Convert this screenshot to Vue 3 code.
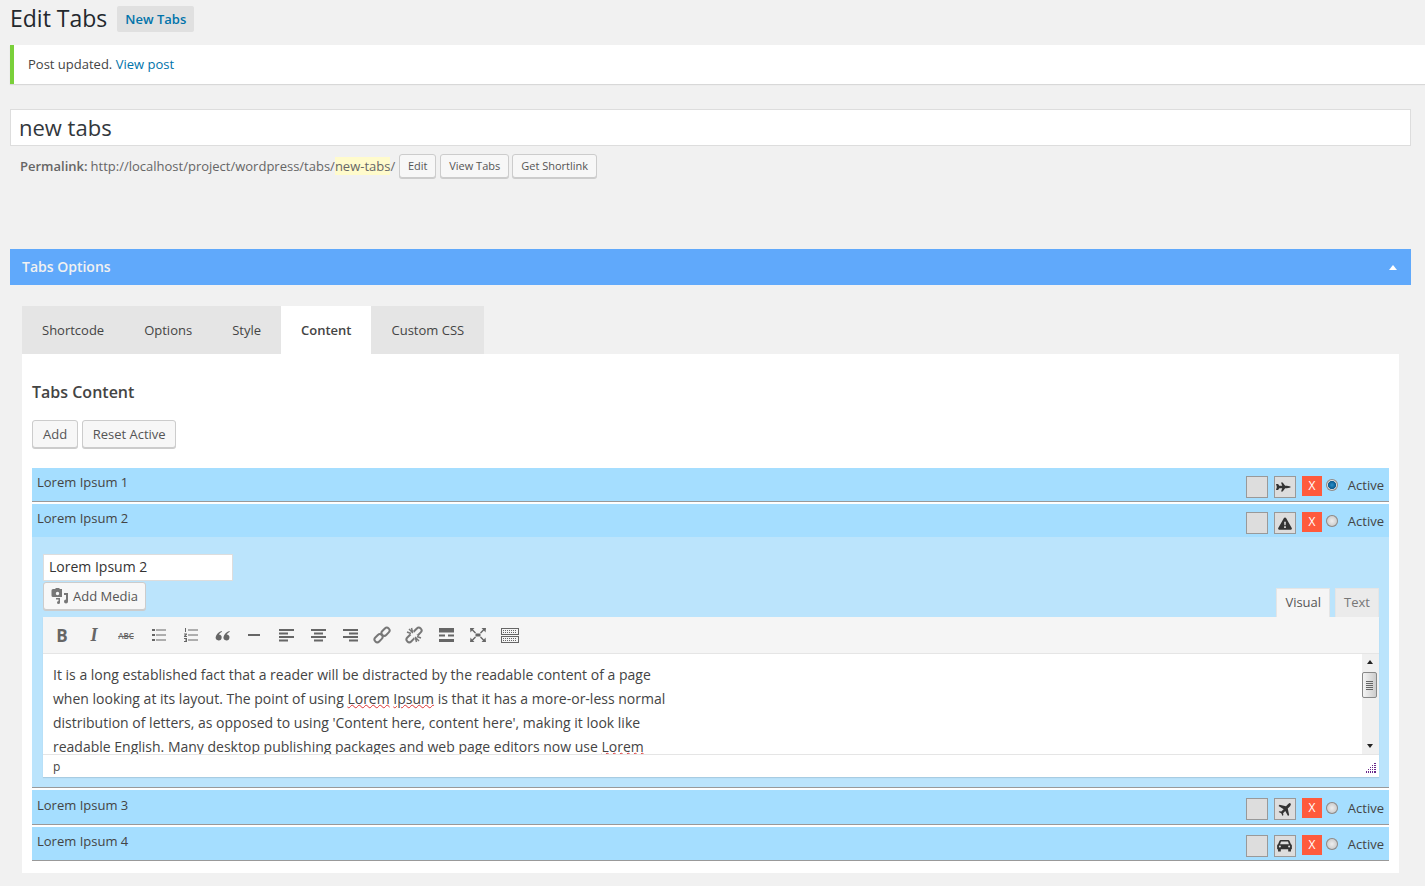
<template>
  <div class="wrap">
    <div class="page-head">
      <h1>Edit Tabs</h1>
      <a class="add-new">New Tabs</a>
    </div>

    <div class="notice">Post updated. <a>View post</a></div>

    <div class="title-box">new tabs</div>
    <div class="permalink">
      <strong>Permalink:</strong>
      <span class="url">http://localhost/project/wordpress/tabs/<span class="slug">new-tabs</span>/</span>
      <button class="btn btn-small btn-edit">Edit</button>
      <button class="btn btn-small">View Tabs</button>
      <button class="btn btn-small">Get Shortlink</button>
    </div>

    <div class="metabox-bar">
      <span class="bar-title">Tabs Options</span>
      <i class="bar-arrow"></i>
    </div>

    <div class="options">
      <div class="tabs">
        <div
          v-for="tab in tabs"
          :key="tab"
          class="tab"
          :class="{ current: tab === 'Content' }"
        >
          {{ tab }}
        </div>
      </div>

      <div class="panel">
        <h3>Tabs Content</h3>
        <div class="panel-actions">
          <button class="btn">Add</button>
          <button class="btn btn-reset">Reset Active</button>
        </div>

        <!-- ITEM 1 -->
        <div class="item">
          <div class="item-head">
            <span class="item-title">Lorem Ipsum 1</span>
            <div class="controls">
              <span class="swatch"></span>
              <span class="swatch icon jet">
                <svg width="15" height="10" viewBox="0 0 18 12"><path fill="#333" d="M0 2.500h2.500L4 4.500h3.500L6 .5h2l3 4h2q4 .5 5 1.500-1 1-5 1.500h-2l-3 4H6l1.500-4H4l-1.500 2H0l1-3.500z"/></svg>
              </span>
              <span class="remove">X</span>
              <span class="radio checked"></span>
              <span class="active-label">Active</span>
            </div>
          </div>
        </div>

        <!-- ITEM 2 -->
        <div class="item open">
          <div class="item-head">
            <span class="item-title">Lorem Ipsum 2</span>
            <div class="controls">
              <span class="swatch"></span>
              <span class="swatch icon">
                <svg width="14" height="13" viewBox="0 0 16 14"><path fill="#333" fill-rule="evenodd" d="M8 0q.8 0 1.200.7l6.500 11.500q.6 1.300-.9 1.800H1.200q-1.500-.5-.9-1.800L6.800.7Q7.200 0 8 0zM7 5l.3 4h1.400L9 5zM7 10v2h2v-2z"/></svg>
              </span>
              <span class="remove">X</span>
              <span class="radio"></span>
              <span class="active-label">Active</span>
            </div>
          </div>

          <div class="item-body">
            <input class="item-input" value="Lorem Ipsum 2" />
            <div class="editor-tools">
              <button class="btn media-btn">
                <svg width="18" height="16" viewBox="0 0 18 16"><path fill="#777" fill-rule="evenodd" d="M2 1h2l1-1h3l1 1h2v8H2a1.500 1.500 0 0 1-1.500-1.500V2.500A1.500 1.500 0 0 1 2 1zm4.500 2.800a1.700 1.700 0 1 0 0 3.400 1.700 1.700 0 0 0 0-3.400z"/><path fill="#777" d="M13 5h4v8.500a2 2 0 1 1-2-2V7h-2zM5 10h4v4.500a1.500 1.500 0 1 1-1.500-1.500V11.500H5z"/></svg>
                Add Media
              </button>
              <div class="mode-tabs">
                <span class="mode on">Visual</span>
                <span class="mode">Text</span>
              </div>
            </div>

            <div class="editor">
              <div class="toolbar">
                <span class="tool tool-b">B</span>
                <span class="tool tool-i">I</span>
                <span class="tool tool-abc">ABC</span>
                <span class="tool">
                  <svg width="15" height="14" viewBox="0 0 15 14"><path fill="#666" d="M1 1h3v2H1zM1 6h3v2H1zM1 11h3v2H1z"/><path stroke="#666" d="M5 2h10M5 7h10M5 12h10"/></svg>
                </span>
                <span class="tool">
                  <svg width="15" height="14" viewBox="0 0 15 14"><path fill="#666" d="M2 0h1v4H2zM1 5.500h3v1L2.500 8H4v1H1V8l1.500-1.500H1zM1 10h3v4H1v-1h2v-.5H2v-1h1V11H1z"/><path stroke="#666" d="M5 2h10M5 7h10M5 12h10"/></svg>
                </span>
                <span class="tool">
                  <svg width="15" height="11" viewBox="0 0 16 12"><path fill="#666" d="M7 1Q1.500 3 .5 8A3.300 3.300 0 1 0 4 4.800Q5 3.300 7.500 2zM15.500 1Q10 3 9 8a3.300 3.300 0 1 0 3.500-3.200Q13.500 3.300 16 2z"/></svg>
                </span>
                <span class="tool">
                  <svg width="14" height="14" viewBox="0 0 14 14"><path fill="#666" d="M1 6h12v2H1z"/></svg>
                </span>
                <span class="tool">
                  <svg width="15" height="14" viewBox="0 0 15 14"><path fill="#666" d="M0 1h15v2H0zM0 4.500h9v2H0zM0 8h15v2H0zM0 11.500h9v2H0z"/></svg>
                </span>
                <span class="tool">
                  <svg width="15" height="14" viewBox="0 0 15 14"><path fill="#666" d="M0 1h15v2H0zM3 4.500h9v2H3zM0 8h15v2H0zM3 11.500h9v2H3z"/></svg>
                </span>
                <span class="tool">
                  <svg width="15" height="14" viewBox="0 0 15 14"><path fill="#666" d="M0 1h15v2H0zM6 4.500h9v2H6zM0 8h15v2H0zM6 11.500h9v2H6z"/></svg>
                </span>
                <span class="tool">
                  <svg width="18" height="18" viewBox="0 0 18 18" fill="none" stroke="#777" stroke-width="2"><rect x="1" y="9.500" width="9" height="5.500" rx="2.700" transform="rotate(-45 5.500 12.200)"/><rect x="8" y="3" width="9" height="5.500" rx="2.700" transform="rotate(-45 12.500 5.700)"/></svg>
                </span>
                <span class="tool">
                  <svg width="18" height="18" viewBox="0 0 18 18" fill="none" stroke="#777" stroke-width="2"><rect x="1" y="9.500" width="9" height="5.500" rx="2.700" transform="rotate(-45 5.500 12.200)"/><rect x="8" y="3" width="9" height="5.500" rx="2.700" transform="rotate(-45 12.500 5.700)"/><path stroke="#f5f5f5" stroke-width="4" d="M4 4l10 10"/><path stroke-width="1.500" d="M4 3l4 4M10 11l4 4M2 6l4 1.500M12 10.500l4 1.500M6.500 2l1 4M10.500 12l1 4"/></svg>
                </span>
                <span class="tool">
                  <svg width="15" height="14" viewBox="0 0 15 14"><path fill="#666" d="M0 0h15v4.500H0zM0 6.500h6v2H0zM9 6.500h6v2H9zM0 11h15v3H0z"/></svg>
                </span>
                <span class="tool">
                  <svg width="16" height="14" viewBox="0 0 16 14"><path fill="#666" d="M5.500 5.500h5v3h-5zM0 0h4.500L3 1.500 6 4.500l-1 1-3-3L.5 4.500zM16 0h-4.500L13 1.500 10 4.500l1 1 3-3 1.500 2zM0 14h4.500L3 12.500l3-3-1-1-3 3-1.500-2zM16 14h-4.500l1.500-1.500-3-3 1-1 3 3 1.500-2z"/></svg>
                </span>
                <span class="tool">
                  <svg width="18" height="15" viewBox="0 0 18 15"><path fill="#666" fill-rule="evenodd" d="M0 0h18v7H0zM1 1v5h16V1zM0 8h18v7H0zM1 9v5h16V9z"/><path stroke="#666" stroke-dasharray="1 1" d="M2 2.500h14M2 4.500h14M2 10.500h14M2 12.500h14"/></svg>
                </span>
              </div>

              <div class="editor-area">
                <div class="editor-text">
                  <div>It is a long established fact that a reader will be distracted by the readable content of a page</div>
                  <div>when looking at its layout. The point of using <span class="typo">Lorem</span> <span class="typo">Ipsum</span> is that it has a more-or-less normal</div>
                  <div>distribution of letters, as opposed to using 'Content here, content here', making it look like</div>
                  <div>readable English. Many desktop publishing packages and web page editors now use <span class="typo">Lorem</span></div>
                </div>
                <div class="scrollbar">
                  <i class="arrow-up"></i>
                  <span class="thumb"><b></b></span>
                  <i class="arrow-down"></i>
                </div>
              </div>

              <div class="statusbar">
                <span>p</span>
                <svg class="grip" width="10" height="10" viewBox="0 0 10 10"><path fill="#6a2a8a" d="M8 0h2v1H8zM6 2h1v1H6zM8 2h2v1H8zM4 4h1v1H4zM6 4h1v1H6zM8 4h2v1H8zM2 6h1v1H2zM4 6h1v1H4zM6 6h1v1H6zM8 6h2v1H8zM0 8h1v2H0zM2 8h1v2H2zM4 8h1v2H4zM6 8h1v2H6zM8 8h2v2H8z"/></svg>
              </div>
            </div>
          </div>
        </div>

        <!-- ITEM 3 -->
        <div class="item third">
          <div class="item-head">
            <span class="item-title">Lorem Ipsum 3</span>
            <div class="controls">
              <span class="swatch"></span>
              <span class="swatch icon">
                <svg width="13" height="13" viewBox="0 0 14 14"><path fill="#333" d="M13.500.5q1 1-.5 3L10.500 6l1.500 7-1.200 1-3-5.500L5.500 11l.3 2-.9.900-1.400-2.800-2.800-1.400.9-.9 2 .3 2.500-2.300L.6 3.200l1-1.200 7 1.500L11 1q2-1.500 2.500-.5z"/></svg>
              </span>
              <span class="remove">X</span>
              <span class="radio"></span>
              <span class="active-label">Active</span>
            </div>
          </div>
        </div>

        <!-- ITEM 4 -->
        <div class="item">
          <div class="item-head">
            <span class="item-title">Lorem Ipsum 4</span>
            <div class="controls">
              <span class="swatch"></span>
              <span class="swatch icon">
                <svg width="15" height="12" viewBox="0 0 16 13"><path fill="#333" fill-rule="evenodd" d="M4 0h8q1 0 1.500 1L15 4.500q1 .5 1 1.500v4h-1v2.500h-3V10H4v2.500H1V10H0V6q0-1 1-1.500L2.500 1Q3 0 4 0zm.2 1.500L3.200 4.500h9.600l-1-3zM3 6a1 1 0 1 0 0 2.200A1 1 0 0 0 3 6zm10 0a1 1 0 1 0 0 2.200A1 1 0 0 0 13 6z"/></svg>
              </span>
              <span class="remove">X</span>
              <span class="radio"></span>
              <span class="active-label">Active</span>
            </div>
          </div>
        </div>
      </div>
    </div>
  </div>
</template>

<script setup>
const tabs = ['Shortcode', 'Options', 'Style', 'Content', 'Custom CSS']
</script>

<style>
html, body {
  background: #f1f1f1;
}
</style>

<style scoped>
.wrap {
  height: 886px;
  overflow: hidden;
  padding: 0 14px 0 10px;
  box-sizing: border-box;
  background: #f1f1f1;
  color: #444;
  font-family: "Open Sans", "Liberation Sans", sans-serif;
  font-size: 13px;
}

.page-head {
  display: flex;
  align-items: center;
  gap: 10px;
  height: 38px;
  margin-bottom: 7px;
}

h1 {
  margin: 0;
  padding-bottom: 2px;
  font-size: 23px;
  font-weight: 400;
  color: #23282d;
}

.add-new {
  padding: 0 8px;
  height: 26px;
  line-height: 26px;
  background: #e0e0e0;
  border-radius: 2px;
  color: #0073aa;
  font-size: 13px;
  font-weight: 600;
}

.notice {
  margin-right: -14px;
  height: 39px;
  line-height: 39px;
  padding-left: 14px;
  border-left: 4px solid #7ad03a;
  background: #fff;
  box-shadow: 0 1px 1px rgba(0, 0, 0, 0.1);
}

.notice a {
  color: #0073aa;
}

.title-box {
  margin-top: 25px;
  height: 37px;
  line-height: 35px;
  padding-left: 8px;
  box-sizing: border-box;
  background: #fff;
  border: 1px solid #ddd;
  color: #32373c;
  font-size: 22px;
}

.permalink {
  display: flex;
  align-items: center;
  height: 24px;
  margin-top: 8px;
  padding-left: 10px;
  color: #666;
}

.permalink strong {
  margin-right: 3px;
  font-weight: 600;
}

.slug {
  background: #fffbcc;
}

.url {
  margin-right: 4px;
}

.btn {
  height: 28px;
  padding: 0 10px;
  background: #f7f7f7;
  border: 1px solid #ccc;
  border-radius: 3px;
  box-shadow: 0 1px 0 #ccc;
  box-sizing: border-box;
  color: #555;
  font-family: inherit;
  font-size: 13px;
}

.btn-small {
  height: 24px;
  margin-right: 3px;
  padding: 0 8px 2px;
  font-size: 11px;
}

.btn-edit {
  width: 37px;
  margin-right: 4px;
  padding-left: 0;
  padding-right: 0;
}

.btn-reset {
  width: 94px;
  padding: 0;
}

.metabox-bar {
  display: flex;
  align-items: center;
  justify-content: space-between;
  height: 36px;
  margin-top: 71px;
  padding: 0 14px 0 12px;
  background: #60a9fb;
  color: #f1f1f1;
  font-size: 14px;
  font-weight: 600;
}

.bar-title {
  padding-bottom: 2px;
}

.bar-arrow {
  width: 0;
  height: 0;
  border: 4px solid transparent;
  border-top: 0;
  border-bottom: 5px solid #fff;
}

.options {
  margin: 21px 12px 0;
}

.tabs {
  display: inline-flex;
  vertical-align: top;
  background: #e5e5e5;
}

.tab {
  height: 48px;
  line-height: 48px;
  padding: 0 20px;
}

.tab.current {
  background: #fff;
  color: #444;
  font-weight: 600;
}

.panel {
  padding: 0 10px 10px;
  background: #fff;
}

h3 {
  margin: 0;
  padding-top: 27px;
  height: 39px;
  line-height: 22px;
  font-size: 16px;
  font-weight: 600;
  color: #444;
}

.panel-actions {
  display: flex;
  gap: 4px;
  margin-bottom: 20px;
}

.item {
  margin-bottom: 2px;
  border-bottom: 1px solid #999;
  background: #a5deff;
}

.item-head {
  display: flex;
  justify-content: space-between;
  height: 33px;
  padding: 0 5px;
  color: #444;
}

.item-title {
  padding-top: 5px;
  line-height: 18px;
}

.controls {
  display: flex;
  align-items: flex-start;
  padding-top: 8px;
}

.third .item-head {
  height: 34px;
}

.third .item-title {
  padding-top: 6px;
}

.third .radio {
  margin-top: 4px;
}

.third .active-label {
  padding-top: 1px;
}

.swatch {
  display: flex;
  align-items: center;
  justify-content: center;
  width: 22px;
  height: 22px;
  margin-right: 6px;
  border: 1px solid #999;
  box-sizing: border-box;
  background: #ddd;
}

.jet svg {
  margin-right: 2px;
}

.remove {
  width: 20px;
  height: 20px;
  margin-right: 4px;
  background: #ff5a3c;
  color: #fff;
  font-size: 12px;
  line-height: 20px;
  text-align: center;
}

.radio {
  width: 12px;
  height: 12px;
  margin-top: 3px;
  margin-right: 10px;
  border-radius: 50%;
  background: radial-gradient(circle at 50% 50%, #eee 0, #d0d0d0 55%, #888 100%);
  box-shadow: inset 0 0 0 1px #8c8c8c;
}

.radio.checked {
  background: radial-gradient(circle at 50% 50%, #2a8fc8 0, #0b5c91 44%, #e0e0e0 52%, #999 100%);
}

.active-label {
  line-height: 19px;
}

.item-body {
  padding: 17px 10px 10px 11px;
  background: #bbe4fc;
}

.item-input {
  display: block;
  width: 190px;
  height: 27px;
  padding: 0 5px 2px;
  box-sizing: border-box;
  background: #fff;
  border: 1px solid #ddd;
  color: #333;
  font-family: inherit;
  font-size: 14px;
}

.editor-tools {
  display: flex;
  justify-content: space-between;
  align-items: flex-end;
  height: 36px;
}

.media-btn {
  display: flex;
  align-items: center;
  gap: 4px;
  align-self: flex-start;
  width: 103px;
  margin-top: 1px;
  padding: 0 0 0 7px;
}

.mode-tabs {
  display: flex;
  gap: 5px;
}

.mode {
  height: 29px;
  line-height: 27px;
  padding: 0 8px;
  box-sizing: border-box;
  background: #ebebeb;
  border: 1px solid #e5e5e5;
  border-bottom: 0;
  color: #777;
}

.mode.on {
  background: #f5f5f5;
  color: #555;
}

.editor {
  box-shadow: 0 1px 1px rgba(0, 0, 0, 0.1);
}

.toolbar {
  display: flex;
  align-items: center;
  height: 37px;
  padding-left: 3px;
  box-sizing: border-box;
  background: #f5f5f5;
  border-bottom: 1px solid #e5e5e5;
}

.tool {
  display: flex;
  align-items: center;
  justify-content: center;
  width: 32px;
  color: #666;
}

.tool-b {
  font-size: 17px;
  font-weight: 700;
}

.tool-i {
  font-family: "Liberation Serif", serif;
  font-size: 18px;
  font-style: italic;
  font-weight: 700;
}

.tool-abc {
  font-size: 8px;
  font-weight: 600;
  text-decoration: line-through;
}

.editor-area {
  display: flex;
  justify-content: space-between;
  height: 100px;
  background: #fff;
}

.editor-text {
  height: 100px;
  padding: 9px 0 0 10px;
  box-sizing: border-box;
  overflow: hidden;
  font-size: 14px;
  line-height: 24px;
  color: #444;
  white-space: nowrap;
}

.typo {
  text-decoration: underline wavy #d33;
  text-decoration-thickness: 1px;
  text-underline-offset: 0;
}

.scrollbar {
  position: relative;
  width: 17px;
  background: #f0f0f0;
}

.arrow-up, .arrow-down {
  position: absolute;
  left: 5px;
  width: 0;
  height: 0;
  border: 3px solid transparent;
}

.arrow-up {
  top: 6px;
  border-top: 0;
  border-bottom: 4px solid #222;
}

.arrow-down {
  bottom: 6px;
  border-bottom: 0;
  border-top: 4px solid #222;
}

.thumb {
  position: absolute;
  top: 18px;
  left: 0;
  display: flex;
  align-items: center;
  justify-content: center;
  width: 15px;
  height: 26px;
  box-sizing: border-box;
  border: 1px solid #888;
  border-radius: 2px;
  background: linear-gradient(90deg, #f4f4f4, #ccc);
}

.thumb b {
  width: 7px;
  height: 9px;
  background: repeating-linear-gradient(#666 0 1px, transparent 1px 2px);
}

.statusbar {
  display: flex;
  justify-content: space-between;
  align-items: flex-end;
  height: 23px;
  padding: 0 3px 1px 10px;
  box-sizing: border-box;
  background: #fff;
  border-top: 1px solid #e5e5e5;
  color: #444;
  font-size: 12px;
  line-height: 18px;
}

.grip {
  display: block;
  margin-bottom: 3px;
}
</style>
